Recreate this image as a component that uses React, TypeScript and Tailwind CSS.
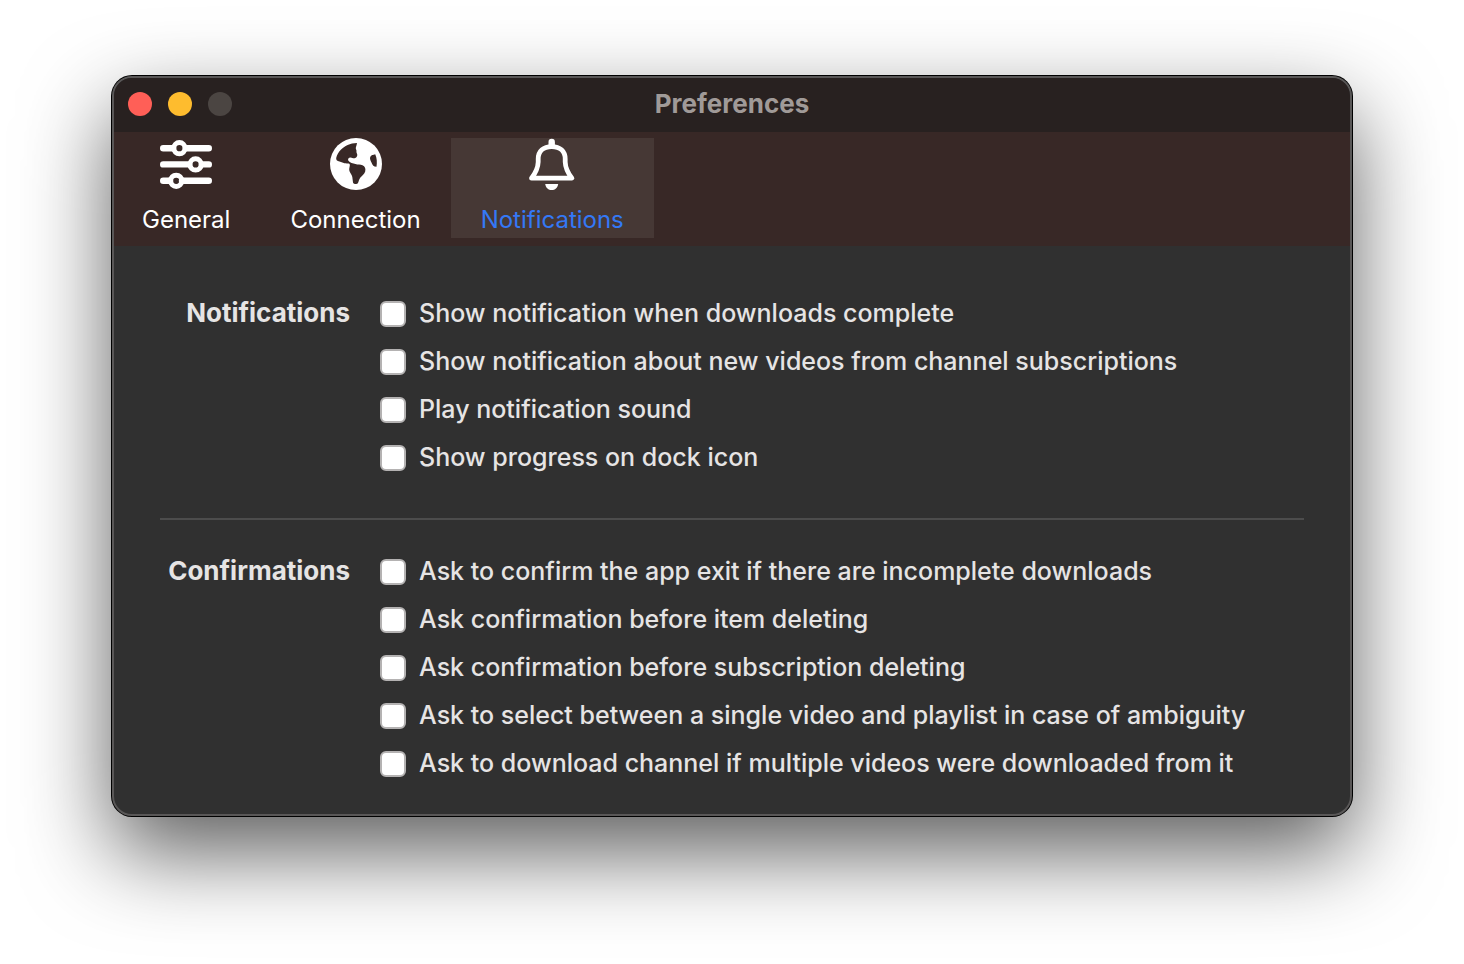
import { useState, type ReactNode } from "react";

function SlidersIcon() {
  return (
    <svg viewBox="0 0 52 52" className="size-[52px]" fill="none" stroke="currentColor" aria-hidden="true">
      <g strokeWidth="6.4" strokeLinecap="round">
        <path d="M3.2 10.2H13M26 10.2H48.8" />
        <path d="M3.2 26.4H29M42 26.4H48.8" />
        <path d="M3.2 42.8H10M22 42.8H48.8" />
      </g>
      <g strokeWidth="5">
        <circle cx="19.4" cy="10.2" r="5.6" />
        <circle cx="35.6" cy="26.4" r="5.6" />
        <circle cx="16.2" cy="42.8" r="5.6" />
      </g>
    </svg>
  );
}

function GlobeIcon() {
  return (
    <svg viewBox="0 0 52 52" className="size-[52px]" aria-hidden="true">
      <circle cx="26" cy="26" r="26" fill="currentColor" />
      <g className="fill-[#382826]">
        <path d="M27 5C20 5.2 14.500 8 10.800 11.800C8.600 14.200 7 17 6.300 19.500C5.700 22 7 22.700 9.500 23.600L14.500 25.300C17 25.600 19 25 19.700 26.200C20.300 27.400 19 30 19.200 32C19.400 34.500 22 36.500 22.300 39L23 44.500C23.300 46.300 27 46.500 28 45C29 43.300 28.800 41.500 30.400 39.600C32 37.700 34.500 36 35.200 33.400C35.900 30.500 35 28.500 32.500 27.300C30.500 26.200 27.500 26.800 25.500 26C23 25.200 19.800 25 18.400 22.800C17.400 21 18.700 19.500 20.500 19.500C22.500 19.600 23.500 21 25.300 20C27 19 28 17.200 26.800 15.200C26 13.800 27 12.600 26 11.200C25.200 9.800 26.700 8 27 5Z" />
        <path d="M45.200 16.300C43.500 16.800 41 17.200 40.200 19C39.500 20.800 40.800 23 41.700 25C42.600 27.200 43.500 28.700 46.500 28.800C47.200 24.500 47 20 45.200 16.300Z" />
      </g>
    </svg>
  );
}

function BellIcon() {
  return (
    <svg viewBox="0 0 52 52" className="size-[52px]" aria-hidden="true">
      <path
        d="M5.500 40.200C9.500 35 12 30.500 12.200 24V21C12.200 13 17.500 8.600 25.700 8.600S39.200 13 39.200 21V24C39.400 30.500 41.900 35 45.900 40.200Z"
        fill="none"
        stroke="currentColor"
        strokeWidth="4.800"
        strokeLinejoin="round"
      />
      <path d="M22.500 8V4A3.200 3.200 0 0 1 28.900 4V8Z" fill="currentColor" />
      <path d="M19.200 46H32.200C31.500 50 29 52 25.700 52S19.900 50 19.200 46Z" fill="currentColor" />
    </svg>
  );
}

const tabs: { name: string; icon: ReactNode }[] = [
  { name: "General", icon: <SlidersIcon /> },
  { name: "Connection", icon: <GlobeIcon /> },
  { name: "Notifications", icon: <BellIcon /> },
];

function OptionGroup({ title, options }: { title: string; options: string[] }) {
  return (
    <fieldset className="flex gap-[30px]" aria-label={title}>
      <div className="w-[190px] shrink-0 text-right text-[26px] leading-[48px] font-bold">{title}</div>
      <div className="flex min-w-0 flex-col">
        {options.map((option) => (
          <label key={option} className="flex min-h-12 items-center gap-[13px]">
            <input
              type="checkbox"
              className="mt-[2px] size-[26px] shrink-0 appearance-none rounded-md border-2 border-[#b4b2b2] bg-white checked:bg-[#3478f6]"
            />
            <span>{option}</span>
          </label>
        ))}
      </div>
    </fieldset>
  );
}

export default function App() {
  const [active, setActive] = useState("Notifications");
  return (
    <div className="min-h-screen bg-white px-28 pt-[76px] pb-[148px] font-['Inter',sans-serif]">
      <main className="overflow-hidden rounded-[20px] border-2 border-[#595757] bg-[#303030] text-[#e6e4e4] shadow-[0_0_0_1px_#000,0_36px_88px_rgba(0,0,0,0.64)]">
        <header className="grid h-[54px] grid-cols-[1fr_auto_1fr] items-center bg-[#282120] px-[14px] pb-[2px]">
          <div className="flex gap-4">
            <button type="button" aria-label="Close" className="size-6 rounded-full bg-[#ff5f57]" />
            <button type="button" aria-label="Minimize" className="size-6 rounded-full bg-[#febc2e]" />
            <button type="button" aria-label="Zoom" disabled className="size-6 rounded-full bg-[#4b4542]" />
          </div>
          <h1 className="text-[26px] leading-8 font-bold text-[#a09a98]">Preferences</h1>
        </header>
        <nav className="-ml-[2px] flex h-[114px] items-start bg-[#382826] pt-[6px]">
          {tabs.map((tab) => (
            <button
              key={tab.name}
              type="button"
              aria-pressed={active === tab.name}
              onClick={() => setActive(tab.name)}
              className={
                active === tab.name
                  ? "flex h-[100px] flex-col items-center gap-[15px] bg-[#463835] px-[30px] text-[#3478f6]"
                  : "flex h-[100px] flex-col items-center gap-[15px] px-[30px] text-white"
              }
            >
              <span className="text-white">{tab.icon}</span>
              <span className="text-2xl leading-[30px]">{tab.name}</span>
            </button>
          ))}
        </nav>
        <div className="px-[46px] pt-[43px] pb-[27px] text-[25px] leading-8 font-medium">
          <OptionGroup
            title="Notifications"
            options={[
              "Show notification when downloads complete",
              "Show notification about new videos from channel subscriptions",
              "Play notification sound",
              "Show progress on dock icon",
            ]}
          />
          <hr className="mt-[37px] mb-[27px] border-t-2 border-[#4c4c4c]" />
          <OptionGroup
            title="Confirmations"
            options={[
              "Ask to confirm the app exit if there are incomplete downloads",
              "Ask confirmation before item deleting",
              "Ask confirmation before subscription deleting",
              "Ask to select between a single video and playlist in case of ambiguity",
              "Ask to download channel if multiple videos were downloaded from it",
            ]}
          />
        </div>
      </main>
    </div>
  );
}
